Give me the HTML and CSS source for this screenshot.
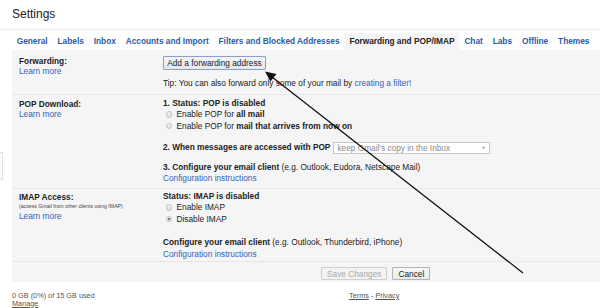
FILE: index.html
```html
<!DOCTYPE html>
<html>
<head>
<meta charset="utf-8">
<link rel="stylesheet" href="styles.css">
</head>
<body>
<div class="page">
  <div class="title">Settings</div>
  <nav class="tabs">
    <span class="tab">General</span>
    <span class="tab">Labels</span>
    <span class="tab">Inbox</span>
    <span class="tab">Accounts and Import</span>
    <span class="tab">Filters and Blocked Addresses</span>
    <span class="tab active">Forwarding and POP/IMAP</span>
    <span class="tab">Chat</span>
    <span class="tab">Labs</span>
    <span class="tab">Offline</span>
    <span class="tab">Themes</span>
  </nav>
  <div class="panel">
    <div class="row row-fwd">
      <div class="label">
        <div class="lbl">Forwarding:</div>
        <a class="link">Learn more</a>
      </div>
      <div class="content">
        <button class="btn btn-focus">Add a forwarding address</button>
        <div class="tip">Tip: You can also forward only some of your mail by <a class="link">creating a filter!</a></div>
      </div>
    </div>
    <div class="row row-pop">
      <div class="label">
        <div class="lbl">POP Download:</div>
        <a class="link">Learn more</a>
      </div>
      <div class="content">
        <div class="line"><b>1. Status: POP is disabled</b></div>
        <div class="line"><span class="radio"></span>Enable POP for <b>all mail</b></div>
        <div class="line"><span class="radio"></span>Enable POP for <b>mail that arrives from now on</b></div>
        <div class="line when"><b>2. When messages are accessed with POP</b><span class="select">keep Gmail's copy in the Inbox<span class="caret">&#9660;</span></span></div>
        <div class="line conf"><b>3. Configure your email client</b> (e.g. Outlook, Eudora, Netscape Mail)</div>
        <div class="line"><a class="link">Configuration instructions</a></div>
      </div>
    </div>
    <div class="row row-imap">
      <div class="label">
        <div class="lbl">IMAP Access:</div>
        <div class="small">(access Gmail from other clients using IMAP)</div>
        <a class="link">Learn more</a>
      </div>
      <div class="content">
        <div class="line"><b>Status: IMAP is disabled</b></div>
        <div class="line"><span class="radio"></span>Enable IMAP</div>
        <div class="line"><span class="radio checked"></span>Disable IMAP</div>
        <div class="line conf2"><b>Configure your email client</b> (e.g. Outlook, Thunderbird, iPhone)</div>
        <div class="line"><a class="link">Configuration instructions</a></div>
      </div>
    </div>
    <div class="actions">
      <button class="btn btn-disabled">Save Changes</button>
      <button class="btn">Cancel</button>
    </div>
  </div>
  <footer class="footer">
    <div class="usage">
      <div>0 GB (0%) of 15 GB used</div>
      <a class="flink">Manage</a>
    </div>
    <div class="legal"><a class="flink">Terms</a> - <a class="flink">Privacy</a></div>
  </footer>
  <div class="edge"></div>
  <svg class="arrow" width="600" height="308" viewBox="0 0 600 308">
    <line x1="523" y1="273" x2="272" y2="77" stroke="#111" stroke-width="1.3"/>
    <polygon points="265,71.5 276.5,74 270.5,81.5" fill="#111"/>
  </svg>
</div>
</body>
</html>
```
FILE: styles.css
```css
* { box-sizing: border-box; }
body {
  margin: 0;
  font-family: "Liberation Sans", Arial, sans-serif;
  font-size: 8.3px;
  color: #222;
  background: #fff;
}
.page { position: relative; width: 600px; height: 308px; overflow: hidden; }
.title {
  height: 30px;
  padding: 8px 0 0 12px;
  font-size: 12px;
  line-height: 12px;
  color: #222;
  border-bottom: 1px solid #ececec;
}
.tabs {
  display: flex;
  height: 20px;
  padding: 3px 0 0 11.8px;
}
.tab {
  padding: 0 4.95px;
  height: 17px;
  line-height: 17px;
  font-size: 8.3px;
  font-weight: bold;
  color: #2a5aa8;
  white-space: nowrap;
}
.tab.active { color: #222; background: #f5f5f5; }
.panel {
  margin-left: 12px;
  height: 232px;
  background: #f5f5f5;
}
.row {
  display: grid;
  grid-template-columns: 144px 1fr;
  padding-left: 7px;
  border-bottom: 1px solid #e6e6e6;
}
.row-fwd { height: 45px; }
.row-pop { height: 94px; }
.row-imap { height: 73px; }
.label { line-height: 10px; }
.row-fwd .label { padding-top: 5.5px; }
.row-pop .label { padding-top: 3.5px; }
.row-imap .label { padding-top: 2.5px; }
.lbl { font-weight: bold; color: #222; }
.link { color: #3462b8; text-decoration: none; display: inline-block; }
.small { font-size: 5.2px; line-height: 9px; color: #444; padding-top: 0.5px; }
.row-imap .label .link { line-height: 11px; }
.content { line-height: 11.5px; }
.row-pop .content { padding-top: 2.5px; }
.row-imap .content { padding-top: 1.5px; }
.btn {
  font-family: "Liberation Sans", Arial, sans-serif;
  font-size: 8.3px;
  height: 14px;
  padding: 0 5px;
  line-height: 12px;
  color: #222;
  background: linear-gradient(#f8f8f8, #e9e9e9);
  border: 1px solid #b4b4b4;
  border-radius: 1px;
  margin: 0;
}
.btn-focus {
  margin-top: 5.5px;
  width: 103px;
  padding: 0;
  border-color: #8ca0c6;
  background: linear-gradient(#f2f4f8, #e6e8ee);
}
.btn-disabled { color: #aaa; border-color: #cfcfcf; background: #f3f3f3; }
.tip { margin-top: 8.5px; line-height: 10px; }
.radio {
  display: inline-block;
  vertical-align: -0.5px;
  width: 6.5px;
  height: 6.5px;
  border-radius: 50%;
  border: 1px solid #c2c2c2;
  background: radial-gradient(circle at 40% 35%, #f4f4f4, #d6d6d6);
  margin: 0 4.5px 0 2.5px;
  position: relative;
}
.radio.checked::after {
  content: "";
  position: absolute;
  left: 1px; top: 1px;
  width: 2.5px; height: 2.5px;
  border-radius: 50%;
  background: #555;
}
.when { margin-top: 9.5px; display: flex; align-items: center; }
.select {
  margin-left: 3px;
  width: 157px;
  height: 12px;
  line-height: 10px;
  border: 1px solid #c8c8c8;
  background: #fff;
  color: #8a8a8a;
  padding-left: 3px;
  display: flex;
  justify-content: space-between;
}
.caret { font-size: 4px; color: #777; padding-right: 4px; }
.conf { margin-top: 8px; }
.conf2 { margin-top: 12px; }
.actions {
  display: flex;
  gap: 5px;
  padding: 4.5px 0 0 309px;
}
.actions .btn { height: 13.5px; }
.footer {
  display: grid;
  grid-template-columns: 337px auto;
  padding: 10px 0 0 12px;
  font-size: 7.3px;
  color: #555;
  line-height: 7.5px;
}
.flink { color: #555; text-decoration: underline; }
.edge {
  position: absolute;
  left: -2px; top: 152px;
  width: 5px; height: 28px;
  border: 1px solid #e2e2e2;
  background: #fafafa;
}
.arrow { position: absolute; left: 0; top: 0; pointer-events: none; }
```
